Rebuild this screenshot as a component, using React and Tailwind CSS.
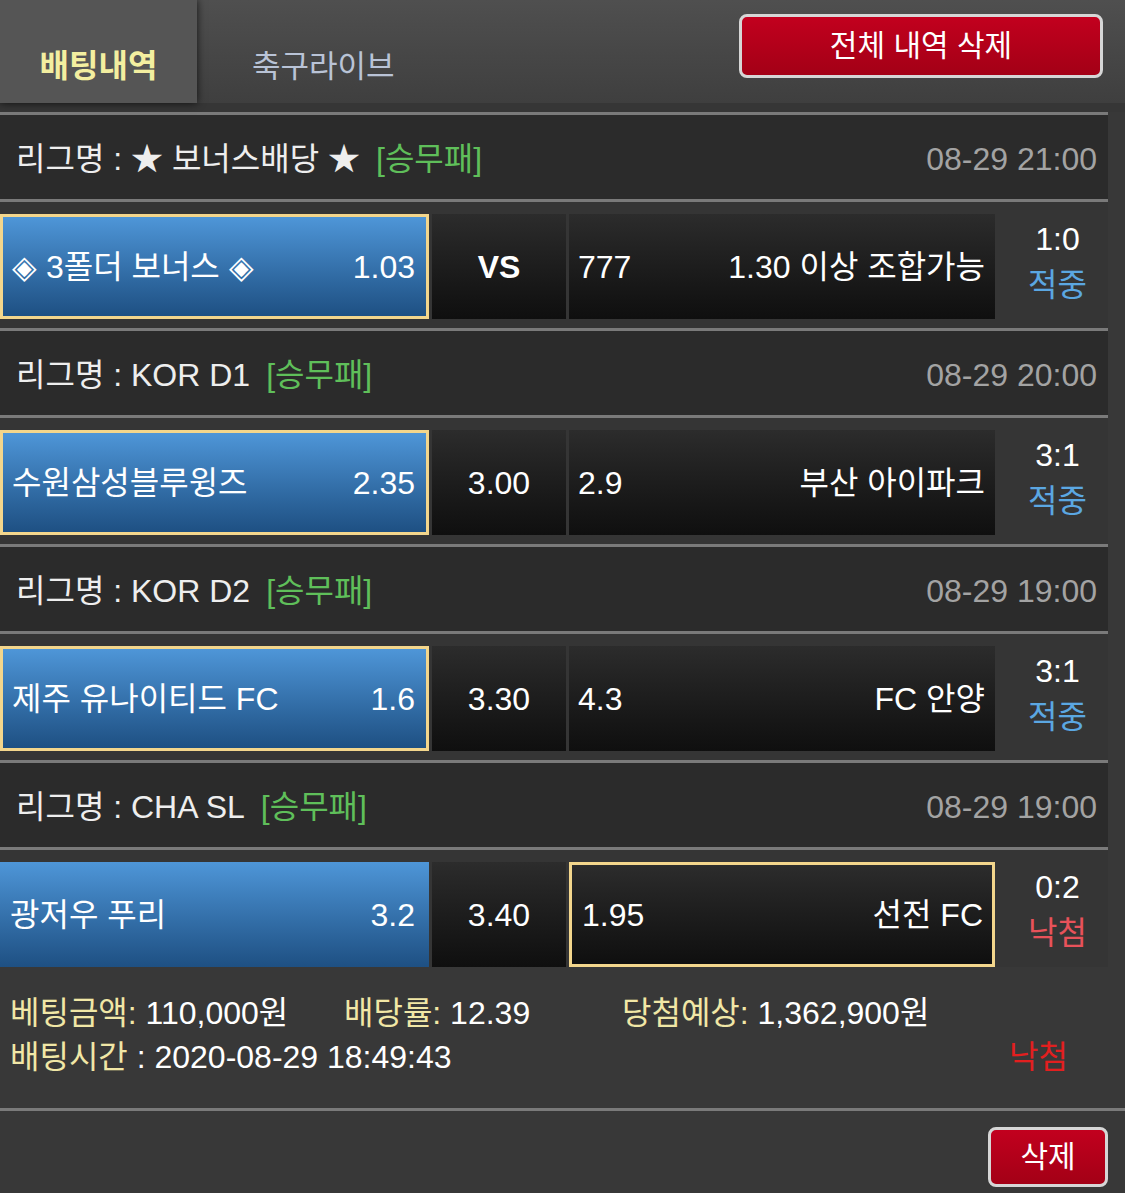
import React from "react";

const matches = [
  { league: "★ 보너스배당 ★", date: "08-29 21:00", home: "◈ 3폴더 보너스 ◈", homeOdd: "1.03", draw: "VS", awayOdd: "777", away: "1.30 이상 조합가능", score: "1:0", result: "적중", pick: "home" },
  { league: "KOR D1", date: "08-29 20:00", home: "수원삼성블루윙즈", homeOdd: "2.35", draw: "3.00", awayOdd: "2.9", away: "부산 아이파크", score: "3:1", result: "적중", pick: "home" },
  { league: "KOR D2", date: "08-29 19:00", home: "제주 유나이티드 FC", homeOdd: "1.6", draw: "3.30", awayOdd: "4.3", away: "FC 안양", score: "3:1", result: "적중", pick: "home" },
  { league: "CHA SL", date: "08-29 19:00", home: "광저우 푸리", homeOdd: "3.2", draw: "3.40", awayOdd: "1.95", away: "선전 FC", score: "0:2", result: "낙첨", pick: "away" },
];

function Line() {
  return <div className="h-[3px] w-[1108px] bg-[#7a7a7a]" />;
}

function Block({ m, last }) {
  const homePicked = m.pick === "home";
  const awayPicked = m.pick === "away";
  return (
    <div className="flex flex-col">
      <div className="flex h-[84px] w-[1108px] items-center justify-between bg-[#2b2b2b] pl-[16px] pr-[11px] pt-[4px]">
        <div className="flex items-center text-[#eeeeee]">
          <span>리그명 : {m.league}</span>
          <span className="ml-[16px] text-[#5fbf5a]">[승무패]</span>
        </div>
        <span className="text-[#a3a3a3]">{m.date}</span>
      </div>
      <Line />
      <div className={`flex w-[1108px] bg-[#353535] pt-[12px] ${last ? "h-[117px]" : "h-[126px]"}`}>
        <div
          className={`flex h-[105px] w-[429px] items-center justify-between bg-linear-to-b from-[#4e96d8] to-[#1e5083] text-white ${
            homePicked ? "border-[3px] border-[#f3d68c] pl-[9px] pr-[11px]" : "pl-[10px] pr-[14px]"
          }`}
        >
          <span>{m.home}</span>
          <span>{m.homeOdd}</span>
        </div>
        <div className="ml-[3px] flex h-[105px] w-[134px] items-center justify-center bg-linear-to-b from-[#2c2c2c] to-[#0f0f0f] text-white">
          <span className={m.draw === "VS" ? "font-bold" : ""}>{m.draw}</span>
        </div>
        <div
          className={`ml-[3px] flex h-[105px] w-[426px] items-center justify-between bg-linear-to-b from-[#2c2c2c] to-[#0f0f0f] text-white ${
            awayPicked ? "border-[3px] border-[#f3d68c] pl-[10px] pr-[9px]" : "pl-[9px] pr-[10px]"
          }`}
        >
          <span>{m.awayOdd}</span>
          <span>{m.away}</span>
        </div>
        <div className="flex h-[105px] w-[113px] flex-col items-center justify-center pb-[10px] pl-[12px]">
          <span className="leading-[46px] text-white">{m.score}</span>
          <span className={`leading-[46px] ${m.result === "적중" ? "text-[#5ba7e2]" : "text-[#e8525a]"}`}>{m.result}</span>
        </div>
      </div>
      {!last && <Line />}
    </div>
  );
}

export default function App() {
  return (
    <div className="min-h-[1193px] w-[1125px] bg-[#383838] font-['Liberation_Sans','Noto_Sans_CJK_KR',sans-serif] text-[32px] leading-[40px]">
      {/* header */}
      <div className="flex h-[103px] w-full bg-linear-to-b from-[#4f4f4f] to-[#3f3f3f]">
        <div className="flex h-[103px] w-[197px] justify-center bg-[#555555] pt-[46px] shadow-[0_0_8px_rgba(0,0,0,0.75)]">
          <span className="text-[32px] font-bold text-[#f3efa0]">배팅내역</span>
        </div>
        <div className="ml-[55px] pt-[46px]">
          <span className="text-[31px] text-[#b9c3d6]">축구라이브</span>
        </div>
        <div className="ml-auto mr-[22px] mt-[14px]">
          <button className="flex h-[64px] w-[364px] items-center justify-center rounded-[8px] border-[3px] border-[#d6d6d6] bg-linear-to-b from-[#c2001e] to-[#a30016] text-[30px] text-white">
            전체 내역 삭제
          </button>
        </div>
      </div>
      <div className="h-[9px] w-full bg-[#363636]" />
      <Line />
      {matches.map((m, i) => (
        <Block key={i} m={m} last={i === matches.length - 1} />
      ))}
      {/* summary */}
      <div className="h-[141px] w-full pl-[10px] pt-[24px]">
        <div className="flex leading-[44px] text-white">
          <span className="w-[334px]">
            <span className="text-[#f1e7a6]">베팅금액:</span> 110,000원
          </span>
          <span className="w-[278px]">
            <span className="text-[#f1e7a6]">배당률:</span> 12.39
          </span>
          <span>
            <span className="text-[#f1e7a6]">당첨예상:</span> 1,362,900원
          </span>
        </div>
        <div className="flex w-[1098px] justify-between pr-[40px] leading-[44px] text-white">
          <span>
            <span className="text-[#f1e7a6]">배팅시간</span> : 2020-08-29 18:49:43
          </span>
          <span className="text-[#e21f1f]">낙첨</span>
        </div>
      </div>
      <div className="h-[3px] w-full bg-[#7a7a7a]" />
      <div className="flex h-[82px] w-full justify-end pr-[17px] pt-[16px]">
        <button className="flex h-[60px] w-[120px] items-center justify-center rounded-[8px] border-[3px] border-[#d6d6d6] bg-linear-to-b from-[#c2001e] to-[#a30016] text-[30px] text-white">
          삭제
        </button>
      </div>
    </div>
  );
}
